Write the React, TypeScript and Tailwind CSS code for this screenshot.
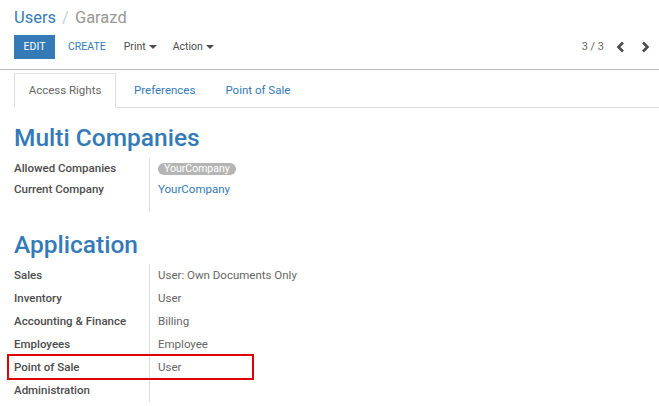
const apps = [
  { label: "Sales", value: "User: Own Documents Only" },
  { label: "Inventory", value: "User" },
  { label: "Accounting & Finance", value: "Billing" },
  { label: "Employees", value: "Employee" },
  { label: "Point of Sale", value: "User", marked: true },
  { label: "Administration", value: "" },
];

function Caret() {
  return <span className="ml-[3px] inline-block border-x-[4px] border-t-[4px] border-x-transparent border-t-[#4c4c4c] align-middle" />;
}

function Chevron({ left }: { left?: boolean }) {
  return (
    <svg width="10" height="12" viewBox="0 0 10 12" className="text-[#4c4c4c]">
      <path d={left ? "M7 1.5 L2.5 6 L7 10.5" : "M3 1.5 L7.5 6 L3 10.5"} fill="none" stroke="currentColor" strokeWidth="2.6" />
    </svg>
  );
}

export default function App() {
  return (
    <div className="h-[406px] w-[659px] overflow-hidden bg-white font-['Roboto',sans-serif] text-[#4c4c4c]">
      <div className="pl-[14px] pr-[9px] pt-[8px]">
        <div className="text-[16.5px] leading-[20px]">
          <span className="text-[#337ab7]">Users</span>
          <span className="mx-[6px] text-[#ccc]">/</span>
          <span className="text-[#999]">Garazd</span>
        </div>
        <div className="mt-[7px] flex h-[24px] items-center text-[10.5px]">
          <button className="h-[24px] w-[41px] bg-[#337ab7] text-white">EDIT</button>
          <span className="ml-[13px] text-[#337ab7]">CREATE</span>
          <span className="ml-[18px] flex items-center text-[#4c4c4c]">
            Print
            <Caret />
          </span>
          <span className="ml-[16px] flex items-center text-[#4c4c4c]">
            Action
            <Caret />
          </span>
          <div className="ml-auto flex items-center">
            <span className="text-[11px] text-[#666]">3 / 3</span>
            <span className="ml-[12px]">
              <Chevron left />
            </span>
            <span className="ml-[14px]">
              <Chevron />
            </span>
          </div>
        </div>
      </div>
      <div className="mt-[10px] border-t border-[#bbb]" />
      <div className="pl-[14px] pt-[3px]">
        <div className="flex h-[35px] border-b border-[#ddd] text-[11.5px]">
          <div className="flex h-[35px] w-[102px] items-center justify-center border border-b-white border-[#ddd] pt-[1px] text-[#666]">
            Access Rights
          </div>
          <div className="flex items-center pl-[18px] pt-[1px] text-[#337ab7]">Preferences</div>
          <div className="flex items-center pl-[30px] pt-[1px] text-[#337ab7]">Point of Sale</div>
        </div>
        <h2 className="mt-[15px] text-[24.5px] font-medium leading-[30px] text-[#337ab7]">Multi Companies</h2>
        <div className="mt-[5px] grid grid-cols-[135px_1fr] text-[11.5px]">
          <div className="pb-[12px] font-medium leading-[21px] text-[#4c4c4c]">
            <div>Allowed Companies</div>
            <div>Current Company</div>
          </div>
          <div className="border-l border-[#ddd] pb-[12px] pl-[8px] leading-[21px]">
            <div className="flex h-[21px] items-center">
              <span className="rounded-full bg-[#b5b5b5] px-[6px] text-[10.5px] leading-[12px] text-white">YourCompany</span>
            </div>
            <div className="text-[#337ab7]">YourCompany</div>
          </div>
        </div>
        <h2 className="mt-[18px] text-[24.5px] font-medium leading-[30px] text-[#337ab7]">Application</h2>
        <div className="mt-[4px] grid grid-cols-[135px_1fr] text-[11.5px]">
          {apps.map((a) => (
            <div key={a.label} className="contents">
              <div className="relative flex h-[23px] items-center font-medium text-[#4c4c4c]">
                {a.marked && (
                  <div className="absolute left-[-7px] top-[-2px] h-[26px] w-[247px] border-[2px] border-[#e00000]" />
                )}
                {a.label}
              </div>
              <div className="flex h-[23px] items-center border-l border-[#ddd] pl-[8px] text-[#666]">{a.value}</div>
            </div>
          ))}
        </div>
      </div>
    </div>
  );
}
